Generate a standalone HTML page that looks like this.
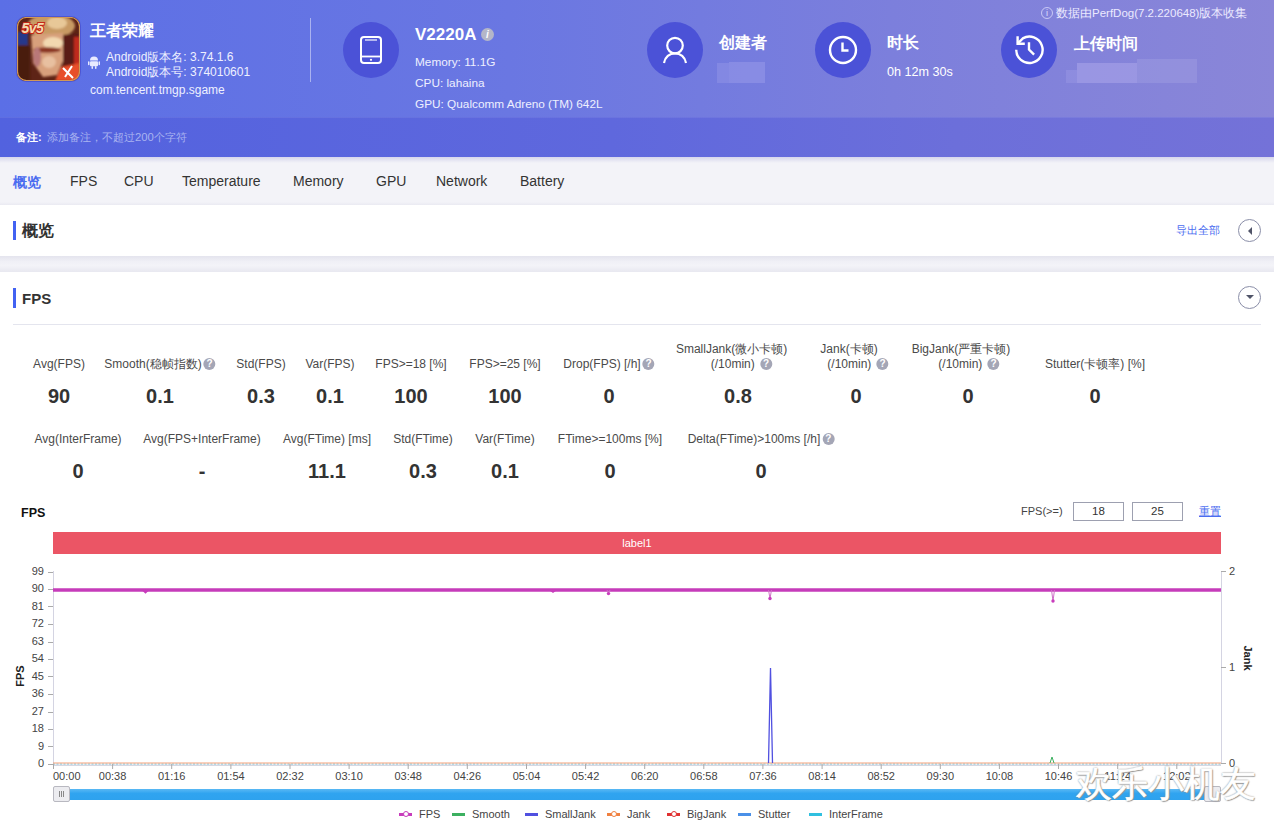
<!DOCTYPE html>
<html><head><meta charset="utf-8"><style>
*{margin:0;padding:0;box-sizing:border-box}
html,body{width:1274px;height:824px;overflow:hidden;background:#f3f3f8;font-family:"Liberation Sans",sans-serif;color:#333}
.abs{position:absolute;white-space:nowrap}
#hdr{position:absolute;left:0;top:0;width:1274px;height:118px;background:linear-gradient(90deg,#5b6fe6 0%,#6a77e2 40%,#7c7fdc 70%,#8a86d8 100%)}
#rmk{position:absolute;left:0;top:117px;width:1274px;height:40px;background:linear-gradient(90deg,#5262df 0%,#5f68dd 48%,#6c6fda 75%,#7472d8 100%);border-top:1px solid rgba(255,255,255,.08)}
.circ{position:absolute;width:56px;height:56px;border-radius:50%;background:#4b52d7}
.w{color:#fff}
.tab{position:absolute;top:173px;font-size:14px;color:#333;white-space:nowrap}
.card{position:absolute;left:0;width:1274px;background:#fff}
.bar{position:absolute;width:3px;background:#4262f2}
.ctitle{position:absolute;font-size:16px;font-weight:bold;color:#333}
.lbl{position:absolute;font-size:12px;color:#4a4a4a;white-space:nowrap;transform:translateX(-50%);text-align:center;line-height:15px}
.val{position:absolute;font-size:20px;font-weight:bold;color:#333;white-space:nowrap;transform:translateX(-50%)}
.q{display:inline-block;width:12px;height:12px;border-radius:50%;background:#a4a6b6;color:#fff;font-size:10px;line-height:12px;text-align:center;font-weight:bold;vertical-align:1px;margin-left:2px}
.yl{position:absolute;font-size:11px;color:#444;text-align:right;width:30px;left:14px}
.xl{position:absolute;font-size:11px;color:#444;top:770px;transform:translateX(-50%)}
</style></head><body>
<div id="hdr"></div>
<div id="rmk"></div>
<div class="abs" style="left:16px;top:16px;width:65px;height:66px;border-radius:10px;background:#4c56d4"></div>
<svg class="abs" style="left:17px;top:17px" width="63" height="64" viewBox="0 0 63 64">
<defs><clipPath id="ic"><rect x="0" y="0" width="63" height="64" rx="9"/></clipPath><filter id="bl" x="-20%" y="-20%" width="140%" height="140%"><feGaussianBlur stdDeviation="1.3"/></filter><filter id="bl2"><feGaussianBlur stdDeviation=".5"/></filter></defs>
<g clip-path="url(#ic)">
<rect x="0" y="0" width="63" height="64" fill="#5e2416"/>
<g filter="url(#bl)">
<rect x="0" y="15" width="11" height="13" fill="#26388a"/>
<rect x="0" y="28" width="13" height="36" fill="#4a1a10"/>
<ellipse cx="34" cy="9" rx="24" ry="12" fill="#c89a64"/>
<ellipse cx="40" cy="6" rx="10" ry="6" fill="#e8c898"/>
<path d="M14 18 L46 16 L46 44 L40 58 L26 60 L16 46 Z" fill="#d8a07c"/>
<ellipse cx="36" cy="26" rx="10" ry="6" fill="#f2d8b0"/>
<ellipse cx="30" cy="33" rx="14" ry="2.8" fill="#8a3624"/>
<ellipse cx="32" cy="45" rx="7" ry="6" fill="#e8c0a0"/>
<ellipse cx="20" cy="40" rx="4" ry="10" fill="#b87878"/>
<path d="M46 18 L63 16 L63 50 L46 50 Z" fill="#5a1c12"/>
<rect x="57" y="20" width="6" height="30" fill="#c02c1c"/>
<path d="M38 64 L44 50 L63 46 L63 64 Z" fill="#e8502a"/>
</g>
<path d="M46 51 L56 61 M55 49 L48 60" stroke="#fff" stroke-width="2" filter="url(#bl2)"/>
<text x="4.5" y="15.5" font-family="Liberation Sans" font-weight="bold" font-style="italic" font-size="14" fill="#f4dcb0" stroke="#c42818" stroke-width="2" paint-order="stroke" letter-spacing="-.5">5v5</text>
</g>
<rect x="0.5" y="0.5" width="62" height="63" rx="9" fill="none" stroke="#d09858" stroke-width="1.2"/>
</svg>
<div class="abs w" style="left:90px;top:21px;font-size:16px;font-weight:bold">王者荣耀</div>
<svg class="abs" style="left:88px;top:56px" width="12" height="13" viewBox="0 0 12 13"><path d="M2 4.5 A4 4 0 0 1 10 4.5 Z" fill="#e8eaff"/><rect x="2" y="5.3" width="8" height="5" rx="1" fill="#e8eaff"/><rect x="0" y="5.3" width="1.5" height="4" rx=".7" fill="#e8eaff"/><rect x="10.5" y="5.3" width="1.5" height="4" rx=".7" fill="#e8eaff"/><rect x="3.5" y="10" width="1.5" height="3" rx=".7" fill="#e8eaff"/><rect x="7" y="10" width="1.5" height="3" rx=".7" fill="#e8eaff"/></svg>
<div class="abs" style="left:106px;top:49.5px;font-size:12px;color:#eef0ff;line-height:15px">Android版本名: 3.74.1.6<br>Android版本号: 374010601</div>
<div class="abs" style="left:90px;top:83px;font-size:12px;color:#eef0ff">com.tencent.tmgp.sgame</div>
<div class="abs" style="left:310px;top:18px;width:1px;height:64px;background:rgba(255,255,255,.45)"></div>

<div class="circ" style="left:343px;top:22px"></div>
<svg class="abs" style="left:359px;top:35px" width="24" height="30" viewBox="0 0 24 30"><rect x="2" y="2" width="20" height="26" rx="3" fill="none" stroke="#fff" stroke-width="2"/><line x1="2" y1="21.5" x2="22" y2="21.5" stroke="#fff" stroke-width="1.8"/><line x1="6" y1="5" x2="18" y2="5" stroke="#fff" stroke-width="1.3" opacity=".9"/><circle cx="12" cy="24.8" r="1.1" fill="#fff"/></svg>
<div class="abs w" style="left:415px;top:25px;font-size:17px;font-weight:bold">V2220A</div>
<div class="abs" style="left:481px;top:28px;width:13px;height:13px;border-radius:50%;background:#b4b6c8;color:#fff;font-size:10px;font-style:italic;font-weight:bold;text-align:center;line-height:13px">i</div>
<div class="abs" style="left:415px;top:55px;font-size:11.8px;color:#eef0ff">Memory: 11.1G</div>
<div class="abs" style="left:415px;top:76px;font-size:11.8px;color:#eef0ff">CPU: lahaina</div>
<div class="abs" style="left:415px;top:97px;font-size:11.8px;color:#eef0ff">GPU: Qualcomm Adreno (TM) 642L</div>

<div class="circ" style="left:647px;top:22px"></div>
<svg class="abs" style="left:661px;top:36px" width="28" height="28" viewBox="0 0 28 28"><circle cx="14" cy="9.6" r="7.8" fill="none" stroke="#fff" stroke-width="2.2"/><path d="M3 27 C4 21 8.5 17.3 14 17.3 C19.5 17.3 24 21 25 27" fill="none" stroke="#fff" stroke-width="2.2"/></svg>
<div class="abs w" style="left:719px;top:33px;font-size:16px;font-weight:bold">创建者</div>
<div class="abs" style="left:717px;top:63px;width:12px;height:20px;background:rgba(160,160,235,.35)"></div><div class="abs" style="left:729px;top:62px;width:36px;height:21px;background:rgba(160,160,235,.45)"></div>

<div class="circ" style="left:815px;top:22px"></div>
<svg class="abs" style="left:827.5px;top:35px" width="30" height="30" viewBox="0 0 30 30"><circle cx="15" cy="15" r="13" fill="none" stroke="#fff" stroke-width="2.4"/><path d="M14.5 7.5 V15.5 H20.5" fill="none" stroke="#fff" stroke-width="2.4"/></svg>
<div class="abs w" style="left:887px;top:33px;font-size:16px;font-weight:bold">时长</div>
<div class="abs" style="left:887px;top:65px;font-size:12.6px;color:#fff">0h 12m 30s</div>

<div class="circ" style="left:1001px;top:22px"></div>
<svg class="abs" style="left:1014px;top:35px" width="30" height="30" viewBox="0 0 30 30"><path d="M2.2 14.8 A13.2 13.2 0 1 0 8.8 3.4 L3.6 8.7" fill="none" stroke="#fff" stroke-width="2.4"/><path d="M3.6 1.2 V8.7 H10.8" fill="none" stroke="#fff" stroke-width="2.4"/><path d="M15 7.2 V14.6 L20.1 19.6" fill="none" stroke="#fff" stroke-width="2.4"/></svg>
<div class="abs w" style="left:1074px;top:34px;font-size:16px;font-weight:bold">上传时间</div>
<div class="abs" style="left:1066px;top:70px;width:11px;height:13px;background:rgba(170,165,235,.3)"></div><div class="abs" style="left:1077px;top:63px;width:60px;height:20px;background:rgba(175,170,235,.5)"></div><div class="abs" style="left:1137px;top:59px;width:60px;height:24px;background:rgba(170,165,230,.35)"></div>

<div class="abs" style="left:1041px;top:7px;width:12px;height:12px;border-radius:50%;border:1px solid rgba(230,230,255,.7);color:#e0e0ff;font-size:9px;text-align:center;line-height:10px">i</div>
<div class="abs" style="left:1056px;top:6px;font-size:11.5px;color:#eceaff">数据由PerfDog(7.2.220648)版本收集</div>

<div class="abs" style="left:16px;top:130px;font-size:11px;color:#fff;font-weight:bold">备注:</div>
<div class="abs" style="left:47px;top:130px;font-size:11.3px;color:#a9b3f0">添加备注，不超过200个字符</div>

<div class="abs" style="left:0;top:157px;width:1274px;height:6px;background:linear-gradient(180deg,#d6d6ec,rgba(243,243,248,0))"></div><div class="abs" style="left:0;top:202px;width:1274px;height:3px;background:linear-gradient(180deg,rgba(235,235,242,0),#eaeaf2)"></div>
<div class="tab" style="left:13px;top:174px;color:#4b6cf0;font-weight:bold;font-size:13.5px">概览</div>
<div class="tab" style="left:70px">FPS</div>
<div class="tab" style="left:124px">CPU</div>
<div class="tab" style="left:182px">Temperature</div>
<div class="tab" style="left:293px">Memory</div>
<div class="tab" style="left:376px">GPU</div>
<div class="tab" style="left:436px">Network</div>
<div class="tab" style="left:520px">Battery</div>

<div class="card" style="top:205px;height:51px"></div>
<div class="abs" style="left:0;top:256px;width:1274px;height:16px;background:linear-gradient(180deg,#e4e4ee 0%,#f0f0f6 35%,#f3f3f8 60%,#e8e8f0 100%)"></div>
<div class="bar" style="left:13px;top:221px;height:19px"></div>
<div class="ctitle" style="left:22px;top:221px">概览</div>
<div class="abs" style="left:1176px;top:223px;font-size:11px;color:#4b6cf0">导出全部</div>
<div class="abs" style="left:1238px;top:219px;width:23px;height:23px;border-radius:50%;border:1px solid #8a8ea8"></div>
<svg class="abs" style="left:1245px;top:225px" width="10" height="12" viewBox="0 0 10 12"><path d="M7 2 L3 6 L7 10 Z" fill="#505468"/></svg>

<div class="card" style="top:272px;height:552px"></div>
<div class="bar" style="left:13px;top:288px;height:20px"></div>
<div class="ctitle" style="left:22px;top:290px;font-size:15px">FPS</div>
<div class="abs" style="left:1238px;top:286px;width:23px;height:23px;border-radius:50%;border:1px solid #8a8ea8"></div>
<svg class="abs" style="left:1244px;top:292px" width="12" height="10" viewBox="0 0 12 10"><path d="M2 3 L10 3 L6 7 Z" fill="#505468"/></svg>
<div class="abs" style="left:13px;top:324px;width:1248px;height:1px;background:#e4e5ee"></div>
<div class="lbl" style="left:59px;top:357px">Avg(FPS)</div>
<div class="val" style="left:59px;top:385px">90</div>
<div class="lbl" style="left:160px;top:357px">Smooth(稳帧指数)<span class=q>?</span></div>
<div class="val" style="left:160px;top:385px">0.1</div>
<div class="lbl" style="left:261px;top:357px">Std(FPS)</div>
<div class="val" style="left:261px;top:385px">0.3</div>
<div class="lbl" style="left:330px;top:357px">Var(FPS)</div>
<div class="val" style="left:330px;top:385px">0.1</div>
<div class="lbl" style="left:411px;top:357px">FPS&gt;=18 [%]</div>
<div class="val" style="left:411px;top:385px">100</div>
<div class="lbl" style="left:505px;top:357px">FPS&gt;=25 [%]</div>
<div class="val" style="left:505px;top:385px">100</div>
<div class="lbl" style="left:609px;top:357px">Drop(FPS) [/h]<span class=q>?</span></div>
<div class="val" style="left:609px;top:385px">0</div>
<div class="lbl" style="left:1095px;top:357px">Stutter(卡顿率) [%]</div>
<div class="val" style="left:1095px;top:385px">0</div>
<div class="lbl" style="left:731.6px;top:342px">SmallJank(微小卡顿)</div>
<div class="lbl" style="left:741.4px;top:357px">(/10min) <span class=q>?</span></div>
<div class="val" style="left:738px;top:385px">0.8</div>
<div class="lbl" style="left:849px;top:342px">Jank(卡顿)</div>
<div class="lbl" style="left:858px;top:357px">(/10min) <span class=q>?</span></div>
<div class="val" style="left:856px;top:385px">0</div>
<div class="lbl" style="left:961px;top:342px">BigJank(严重卡顿)</div>
<div class="lbl" style="left:969px;top:357px">(/10min) <span class=q>?</span></div>
<div class="val" style="left:968px;top:385px">0</div>
<div class="lbl" style="left:78px;top:432px">Avg(InterFrame)</div>
<div class="val" style="left:78px;top:460px">0</div>
<div class="lbl" style="left:202px;top:432px">Avg(FPS+InterFrame)</div>
<div class="val" style="left:202px;top:460px">-</div>
<div class="lbl" style="left:327px;top:432px">Avg(FTime) [ms]</div>
<div class="val" style="left:327px;top:460px">11.1</div>
<div class="lbl" style="left:423px;top:432px">Std(FTime)</div>
<div class="val" style="left:423px;top:460px">0.3</div>
<div class="lbl" style="left:505px;top:432px">Var(FTime)</div>
<div class="val" style="left:505px;top:460px">0.1</div>
<div class="lbl" style="left:610px;top:432px">FTime&gt;=100ms [%]</div>
<div class="val" style="left:610px;top:460px">0</div>
<div class="lbl" style="left:761px;top:432px">Delta(FTime)&gt;100ms [/h]<span class=q>?</span></div>
<div class="val" style="left:761px;top:460px">0</div>

<div class="abs" style="left:21px;top:506px;font-size:12.5px;font-weight:bold;color:#111">FPS</div>
<div class="abs" style="left:1021px;top:505px;font-size:11px;color:#444">FPS(&gt;=)</div>
<div class="abs" style="left:1073px;top:502px;width:51px;height:19px;border:1px solid #9da0b0;font-size:11.5px;color:#333;text-align:center;line-height:17px">18</div>
<div class="abs" style="left:1132px;top:502px;width:51px;height:19px;border:1px solid #9da0b0;font-size:11.5px;color:#333;text-align:center;line-height:17px">25</div>
<div class="abs" style="left:1199px;top:504px;font-size:11px;color:#4b6cf0;text-decoration:underline">重置</div>
<div class="abs" style="left:53px;top:532px;width:1168px;height:22px;background:#eb5565;color:#fff;font-size:11px;text-align:center;line-height:22px">label1</div>
<div class="yl" style="top:564.5px">99</div>
<div class="yl" style="top:582.0px">90</div>
<div class="yl" style="top:599.5px">81</div>
<div class="yl" style="top:617.0px">72</div>
<div class="yl" style="top:634.5px">63</div>
<div class="yl" style="top:652.0px">54</div>
<div class="yl" style="top:669.5px">45</div>
<div class="yl" style="top:687.0px">36</div>
<div class="yl" style="top:704.5px">27</div>
<div class="yl" style="top:722.0px">18</div>
<div class="yl" style="top:739.5px">9</div>
<div class="yl" style="top:757.0px">0</div>
<div class="abs" style="left:53px;top:770px;font-size:11px;color:#444">00:00</div>
<div class="xl" style="left:112.6px">00:38</div>
<div class="xl" style="left:171.7px">01:16</div>
<div class="xl" style="left:230.9px">01:54</div>
<div class="xl" style="left:290.0px">02:32</div>
<div class="xl" style="left:349.1px">03:10</div>
<div class="xl" style="left:408.2px">03:48</div>
<div class="xl" style="left:467.3px">04:26</div>
<div class="xl" style="left:526.5px">05:04</div>
<div class="xl" style="left:585.6px">05:42</div>
<div class="xl" style="left:644.7px">06:20</div>
<div class="xl" style="left:703.8px">06:58</div>
<div class="xl" style="left:762.9px">07:36</div>
<div class="xl" style="left:822.1px">08:14</div>
<div class="xl" style="left:881.2px">08:52</div>
<div class="xl" style="left:940.3px">09:30</div>
<div class="xl" style="left:999.4px">10:08</div>
<div class="xl" style="left:1058.5px">10:46</div>
<div class="xl" style="left:1117.7px">11:24</div>
<div class="xl" style="left:1176.8px">12:02</div>
<svg class="abs" style="left:0;top:560px" width="1274" height="250" viewBox="0 560 1274 250"><line x1="53.5" y1="571" x2="53.5" y2="764" stroke="#d4d4e2" stroke-width="1"/><line x1="1221.5" y1="571" x2="1221.5" y2="764" stroke="#d4d4e2" stroke-width="1"/><line x1="48" y1="572.5" x2="53" y2="572.5" stroke="#aaa" stroke-width="1"/><line x1="48" y1="589.5" x2="53" y2="589.5" stroke="#aaa" stroke-width="1"/><line x1="48" y1="606.5" x2="53" y2="606.5" stroke="#aaa" stroke-width="1"/><line x1="48" y1="624.5" x2="53" y2="624.5" stroke="#aaa" stroke-width="1"/><line x1="48" y1="642.5" x2="53" y2="642.5" stroke="#aaa" stroke-width="1"/><line x1="48" y1="659.5" x2="53" y2="659.5" stroke="#aaa" stroke-width="1"/><line x1="48" y1="676.5" x2="53" y2="676.5" stroke="#aaa" stroke-width="1"/><line x1="48" y1="694.5" x2="53" y2="694.5" stroke="#aaa" stroke-width="1"/><line x1="48" y1="712.5" x2="53" y2="712.5" stroke="#aaa" stroke-width="1"/><line x1="48" y1="729.5" x2="53" y2="729.5" stroke="#aaa" stroke-width="1"/><line x1="48" y1="746.5" x2="53" y2="746.5" stroke="#aaa" stroke-width="1"/><line x1="48" y1="764.5" x2="53" y2="764.5" stroke="#aaa" stroke-width="1"/><line x1="1221" y1="571.5" x2="1226" y2="571.5" stroke="#aaa" stroke-width="1"/><line x1="1221" y1="667.5" x2="1226" y2="667.5" stroke="#aaa" stroke-width="1"/><line x1="1221" y1="763.5" x2="1226" y2="763.5" stroke="#aaa" stroke-width="1"/><line x1="53" y1="765.2" x2="1221" y2="765.2" stroke="#c4c6d4" stroke-width="1"/><line x1="53" y1="764" x2="1221" y2="764" stroke="#7cc8dc" stroke-width="1" stroke-dasharray="2 1.5"/><line x1="53.5" y1="764" x2="53.5" y2="769" stroke="#aaa" stroke-width="1"/><line x1="112.6" y1="764" x2="112.6" y2="769" stroke="#aaa" stroke-width="1"/><line x1="171.7" y1="764" x2="171.7" y2="769" stroke="#aaa" stroke-width="1"/><line x1="230.9" y1="764" x2="230.9" y2="769" stroke="#aaa" stroke-width="1"/><line x1="290.0" y1="764" x2="290.0" y2="769" stroke="#aaa" stroke-width="1"/><line x1="349.1" y1="764" x2="349.1" y2="769" stroke="#aaa" stroke-width="1"/><line x1="408.2" y1="764" x2="408.2" y2="769" stroke="#aaa" stroke-width="1"/><line x1="467.3" y1="764" x2="467.3" y2="769" stroke="#aaa" stroke-width="1"/><line x1="526.5" y1="764" x2="526.5" y2="769" stroke="#aaa" stroke-width="1"/><line x1="585.6" y1="764" x2="585.6" y2="769" stroke="#aaa" stroke-width="1"/><line x1="644.7" y1="764" x2="644.7" y2="769" stroke="#aaa" stroke-width="1"/><line x1="703.8" y1="764" x2="703.8" y2="769" stroke="#aaa" stroke-width="1"/><line x1="762.9" y1="764" x2="762.9" y2="769" stroke="#aaa" stroke-width="1"/><line x1="822.1" y1="764" x2="822.1" y2="769" stroke="#aaa" stroke-width="1"/><line x1="881.2" y1="764" x2="881.2" y2="769" stroke="#aaa" stroke-width="1"/><line x1="940.3" y1="764" x2="940.3" y2="769" stroke="#aaa" stroke-width="1"/><line x1="999.4" y1="764" x2="999.4" y2="769" stroke="#aaa" stroke-width="1"/><line x1="1058.5" y1="764" x2="1058.5" y2="769" stroke="#aaa" stroke-width="1"/><line x1="1117.7" y1="764" x2="1117.7" y2="769" stroke="#aaa" stroke-width="1"/><line x1="1176.8" y1="764" x2="1176.8" y2="769" stroke="#aaa" stroke-width="1"/><line x1="53" y1="763" x2="1221" y2="763" stroke="#f4a078" stroke-width="1"/><line x1="53" y1="590" x2="1221" y2="590" stroke="#c63cba" stroke-width="3.4"/><path d="M143.5 590 L145.5 592 L147.5 590" fill="none" stroke="#c83cbc" stroke-width="2.5"/><path d="M551 590 L553 591.5 L555 590" fill="none" stroke="#c83cbc" stroke-width="2.5"/><path d="M607.0 590 L608.5 593.6 L610.0 590" fill="none" stroke="#d070c8" stroke-width="1"/><circle cx="608.5" cy="593.6" r="1.7" fill="#c83cbc"/><path d="M768.5 590 L770 598.5 L771.5 590" fill="none" stroke="#d070c8" stroke-width="1"/><circle cx="770" cy="598.5" r="1.7" fill="#c83cbc"/><path d="M1051.5 590 L1053 601 L1054.5 590" fill="none" stroke="#d070c8" stroke-width="1"/><circle cx="1053" cy="601" r="1.7" fill="#c83cbc"/><path d="M768.5 763 L770.5 668 L772.5 763" fill="none" stroke="#5050e0" stroke-width="1.3"/><path d="M1050 763 L1052 757 L1054 763" fill="none" stroke="#3cb060" stroke-width="1"/></svg>
<div class="abs" style="left:9px;top:676px;transform:translate(0,-50%) rotate(-90deg);font-size:11px;font-weight:bold;color:#222">FPS</div>
<div class="abs" style="left:1229px;top:565px;font-size:11px;color:#444">2</div>
<div class="abs" style="left:1229px;top:661px;font-size:11px;color:#444">1</div>
<div class="abs" style="left:1229px;top:757px;font-size:11px;color:#444">0</div>
<div class="abs" style="left:1235px;top:652px;transform:rotate(90deg);font-size:11px;font-weight:bold;color:#222">Jank</div>
<div class="abs" style="left:53px;top:789px;width:1168px;height:11px;background:linear-gradient(180deg,#5ab8f4,#30a4f0 40%,#2ea2ee)"></div>
<div class="abs" style="left:53px;top:786px;width:17px;height:16px;background:#ececf0;border:1px solid #b8b8c0;border-radius:2px"></div>
<div class="abs" style="left:59px;top:791px;width:1px;height:6px;background:#888"></div>
<div class="abs" style="left:61px;top:791px;width:1px;height:6px;background:#888"></div>
<div class="abs" style="left:63px;top:791px;width:1px;height:6px;background:#888"></div>
<div class="abs" style="left:1204px;top:786px;width:17px;height:16px;background:#ececf0;border:1px solid #b8b8c0;border-radius:2px"></div>
<div class="abs" style="left:399px;top:813px;width:13px;height:3px;background:#c83cbc"></div><div class="abs" style="left:403px;top:811px;width:6px;height:6px;border-radius:50%;border:1.5px solid #c83cbc;background:#fff"></div><div class="abs" style="left:419px;top:808px;font-size:11px;color:#444">FPS</div>
<div class="abs" style="left:452px;top:813px;width:13px;height:3px;background:#3cb060"></div><div class="abs" style="left:472px;top:808px;font-size:11px;color:#444">Smooth</div>
<div class="abs" style="left:525px;top:813px;width:13px;height:3px;background:#5050e0"></div><div class="abs" style="left:545px;top:808px;font-size:11px;color:#444">SmallJank</div>
<div class="abs" style="left:607px;top:813px;width:13px;height:3px;background:#f08040"></div><div class="abs" style="left:611px;top:811px;width:6px;height:6px;border-radius:50%;border:1.5px solid #f08040;background:#fff"></div><div class="abs" style="left:627px;top:808px;font-size:11px;color:#444">Jank</div>
<div class="abs" style="left:667px;top:813px;width:13px;height:3px;background:#e03030"></div><div class="abs" style="left:671px;top:811px;width:6px;height:6px;border-radius:50%;border:1.5px solid #e03030;background:#fff"></div><div class="abs" style="left:687px;top:808px;font-size:11px;color:#444">BigJank</div>
<div class="abs" style="left:738px;top:813px;width:13px;height:3px;background:#4a90e8"></div><div class="abs" style="left:758px;top:808px;font-size:11px;color:#444">Stutter</div>
<div class="abs" style="left:809px;top:813px;width:13px;height:3px;background:#30c0e0"></div><div class="abs" style="left:829px;top:808px;font-size:11px;color:#444">InterFrame</div>
<div class="abs" style="left:1076px;top:760px;font-size:36px;color:#fff;-webkit-text-stroke:.6px #fff;text-shadow:0 0 1px #777,0 0 2px #888,1px 1px 1px #999">欢乐小机友</div></body></html>
